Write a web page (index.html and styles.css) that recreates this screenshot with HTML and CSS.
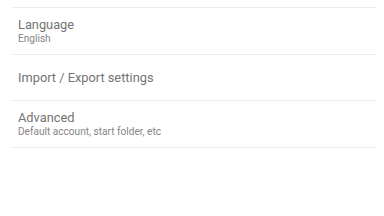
FILE: index.html
```html
<!DOCTYPE html>
<html>
<head>
<meta charset="utf-8">
<link rel="stylesheet" href="styles.css">
</head>
<body>
<div class="list">
  <div class="item item-top"></div>
  <div class="item">
    <div class="title">Language</div>
    <div class="sub">English</div>
  </div>
  <div class="item">
    <div class="title">Import / Export settings</div>
  </div>
  <div class="item">
    <div class="title">Advanced</div>
    <div class="sub">Default account, start folder, etc</div>
  </div>
</div>
</body>
</html>
```
FILE: styles.css
```css
html, body {
  margin: 0;
  padding: 0;
  background: #ffffff;
}
body {
  width: 384px;
  height: 216px;
  font-family: Roboto, "Noto Sans", sans-serif;
}
.list {
  padding: 0 8px 0 12px;
}
.item {
  box-sizing: border-box;
  height: 46.6px;
  border-bottom: 1px solid #ededed;
  display: flex;
  flex-direction: column;
  justify-content: center;
  padding: 1px 0 0 6px;
}
.item-top {
  height: 8px;
  padding: 0;
}
.title {
  font-size: 12.8px;
  line-height: 15px;
  color: #737373;
}
.sub {
  font-size: 10.1px;
  line-height: 14px;
  color: #858585;
}
```
